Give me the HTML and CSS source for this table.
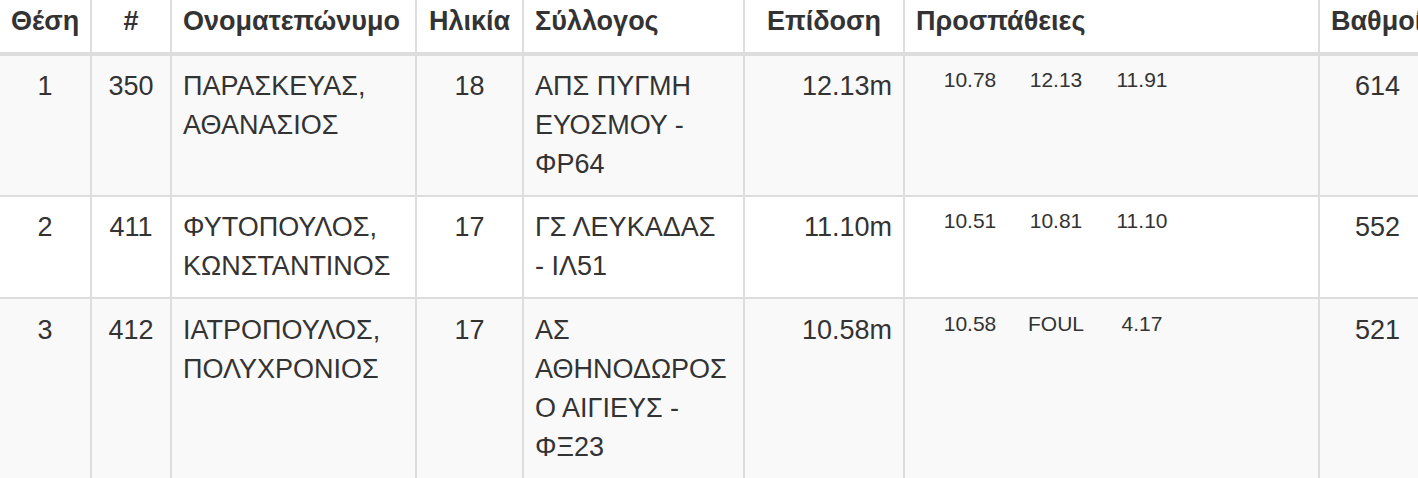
FILE: index.html
```html
<!DOCTYPE html>
<html lang="el">
<head>
<meta charset="utf-8">
<title>Αποτελέσματα</title>
<link rel="stylesheet" href="styles.css">
</head>
<body>
<table class="results">
  <colgroup>
    <col class="c-pos">
    <col class="c-bib">
    <col class="c-name">
    <col class="c-age">
    <col class="c-club">
    <col class="c-mark">
    <col class="c-att">
    <col class="c-pts">
  </colgroup>
  <thead>
    <tr>
      <th class="center">Θέση</th>
      <th class="center">#</th>
      <th>Ονοματεπώνυμο</th>
      <th class="center">Ηλικία</th>
      <th>Σύλλογος</th>
      <th class="center">Επίδοση</th>
      <th>Προσπάθειες</th>
      <th>Βαθμοί</th>
    </tr>
  </thead>
  <tbody>
    <tr>
      <td class="center">1</td>
      <td class="center">350</td>
      <td>ΠΑΡΑΣΚΕΥΑΣ, ΑΘΑΝΑΣΙΟΣ</td>
      <td class="center">18</td>
      <td class="club">ΑΠΣ ΠΥΓΜΗ ΕΥΟΣΜΟΥ - ΦΡ64</td>
      <td class="right">12.13m</td>
      <td><div class="attempts"><span>10.78</span><span>12.13</span><span>11.91</span></div></td>
      <td class="center">614</td>
    </tr>
    <tr>
      <td class="center">2</td>
      <td class="center">411</td>
      <td>ΦΥΤΟΠΟΥΛΟΣ, ΚΩΝΣΤΑΝΤΙΝΟΣ</td>
      <td class="center">17</td>
      <td class="club">ΓΣ ΛΕΥΚΑΔΑΣ - ΙΛ51</td>
      <td class="right">11.10m</td>
      <td><div class="attempts"><span>10.51</span><span>10.81</span><span>11.10</span></div></td>
      <td class="center">552</td>
    </tr>
    <tr>
      <td class="center">3</td>
      <td class="center">412</td>
      <td>ΙΑΤΡΟΠΟΥΛΟΣ, ΠΟΛΥΧΡΟΝΙΟΣ</td>
      <td class="center">17</td>
      <td class="club">ΑΣ ΑΘΗΝΟΔΩΡΟΣ Ο ΑΙΓΙΕΥΣ - ΦΞ23</td>
      <td class="right">10.58m</td>
      <td><div class="attempts"><span>10.58</span><span>FOUL</span><span>4.17</span></div></td>
      <td class="center">521</td>
    </tr>
  </tbody>
</table>
</body>
</html>
```
FILE: styles.css
```css
html {
  overflow: hidden;
}
body {
  margin: 0;
  background: #fff;
  color: #333;
  font-family: "Liberation Sans", Arial, Helvetica, sans-serif;
  font-size: 27px;
  line-height: 39px;
}
.results {
  table-layout: fixed;
  width: 1435px;
  border-collapse: separate;
  border-spacing: 0;
  margin-top: -9px;
}
.c-pos { width: 90px; }
.c-bib { width: 80px; }
.c-name { width: 245px; }
.c-age { width: 107px; }
.c-club { width: 221px; }
.c-mark { width: 160px; }
.c-att { width: 415px; }
.c-pts { width: 117px; }

.results th,
.results td {
  padding: 11px;
  vertical-align: top;
  text-align: left;
  border-left: 2px solid #ddd;
}
.results th:first-child,
.results td:first-child {
  border-left: none;
}
.results th {
  font-weight: bold;
  border-bottom: 4px solid #ddd;
  white-space: nowrap;
  overflow: hidden;
}
.results tbody tr + tr td {
  border-top: 2px solid #ddd;
}
.results tbody tr + tr + tr td {
  padding-top: 12px;
}
.results tbody tr:nth-child(odd) td {
  background: #f9f9f9;
}
.results .club {
  padding-right: 14px;
}
.results .center {
  text-align: center;
}
.results .right {
  text-align: right;
}
.attempts {
  display: flex;
  margin-left: 11px;
  font-size: 21px;
  line-height: 26px;
}
.attempts span {
  width: 86px;
  text-align: center;
}
```
